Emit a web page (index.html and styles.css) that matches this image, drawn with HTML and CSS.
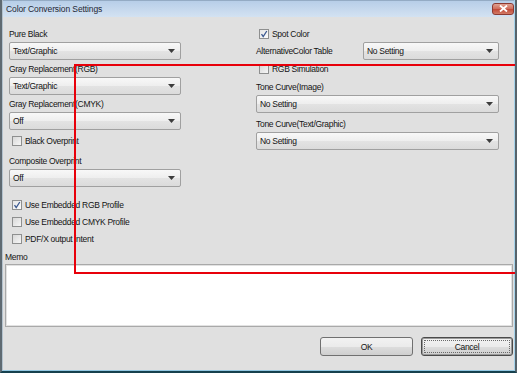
FILE: index.html
```html
<!DOCTYPE html>
<html lang="en">
<head>
  <meta charset="UTF-8" />
  <meta name="viewport" content="width=device-width, initial-scale=1.0" />
  <title>Color Conversion Settings</title>
  <link rel="stylesheet" href="styles.css">
</head>
<body>
  <div class="window">
    <div class="frame">
      <div class="titlebar">
        <span class="title">Color Conversion Settings</span>
        <span class="close">
          <svg width="9" height="7" viewBox="0 0 9 7"><path d="M1 0.5 L8 6.5 M8 0.5 L1 6.5" stroke="#fff" stroke-width="1.8"/></svg>
        </span>
      </div>

      <div class="body">
        <div class="columns">
          <div class="col col-left">
            <div class="field">
              <div class="label">Pure Black</div>
              <div class="select"><span>Text/Graphic</span><svg class="arrow" width="7" height="4" viewBox="0 0 7 4"><polygon points="0,0 7,0 3.5,4" /></svg></div>
            </div>
            <div class="field">
              <div class="label">Gray Replacement(RGB)</div>
              <div class="select"><span>Text/Graphic</span><svg class="arrow" width="7" height="4" viewBox="0 0 7 4"><polygon points="0,0 7,0 3.5,4" /></svg></div>
            </div>
            <div class="field">
              <div class="label">Gray Replacement(CMYK)</div>
              <div class="select"><span>Off</span><svg class="arrow" width="7" height="4" viewBox="0 0 7 4"><polygon points="0,0 7,0 3.5,4" /></svg></div>
            </div>
            <label class="check-row tall"><span class="box"></span>Black Overprint</label>
            <div class="field composite">
              <div class="label">Composite Overprint</div>
              <div class="select"><span>Off</span><svg class="arrow" width="7" height="4" viewBox="0 0 7 4"><polygon points="0,0 7,0 3.5,4" /></svg></div>
            </div>
            <div class="check-list">
              <label class="check-row"><span class="box checked"><svg width="8" height="8" viewBox="0 0 8 8"><path d="M1.5 4.2 L3.2 6.5 L6.8 1" fill="none" stroke="#3d5a91" stroke-width="1.3"/></svg></span>Use Embedded RGB Profile</label>
              <label class="check-row"><span class="box"></span>Use Embedded CMYK Profile</label>
              <label class="check-row"><span class="box"></span>PDF/X output intent</label>
            </div>
          </div>

          <div class="col col-right">
            <label class="check-row top"><span class="box checked"><svg width="8" height="8" viewBox="0 0 8 8"><path d="M1.5 4.2 L3.2 6.5 L6.8 1" fill="none" stroke="#3d5a91" stroke-width="1.3"/></svg></span>Spot Color</label>
            <div class="inline-field">
              <div class="label">AlternativeColor Table</div>
              <div class="select"><span>No Setting</span><svg class="arrow" width="7" height="4" viewBox="0 0 7 4"><polygon points="0,0 7,0 3.5,4" /></svg></div>
            </div>
            <label class="check-row rgb"><span class="box"></span>RGB Simulation</label>
            <div class="field tone">
              <div class="label">Tone Curve(Image)</div>
              <div class="select"><span>No Setting</span><svg class="arrow" width="7" height="4" viewBox="0 0 7 4"><polygon points="0,0 7,0 3.5,4" /></svg></div>
            </div>
            <div class="field tone-2">
              <div class="label">Tone Curve(Text/Graphic)</div>
              <div class="select"><span>No Setting</span><svg class="arrow" width="7" height="4" viewBox="0 0 7 4"><polygon points="0,0 7,0 3.5,4" /></svg></div>
            </div>
          </div>
        </div>

        <div class="memo">
          <div class="label">Memo</div>
          <div class="memo-box"></div>
        </div>

        <div class="actions">
          <button class="btn">OK</button>
          <button class="btn default"><span>Cancel</span></button>
        </div>
      </div>
    </div>

    <div class="callout"></div>
  </div>
</body>
</html>
```

FILE: styles.css
```css
* {
  box-sizing: border-box;
}
html, body {
  margin: 0;
  padding: 0;
}
body {
  font-family: 'Liberation Sans', Arial, sans-serif;
  font-size: 8.5px;
  letter-spacing: -0.3px;
  color: #141414;
  background: #e0e0e0;
}
.window {
  position: relative;
  width: 517px;
  height: 373px;
  overflow: hidden;
  border-left: 2px solid #5f6a72;
  border-right: 2px solid #56636b;
  border-bottom: 2px solid #16414e;
  background: #e0e0e0;
}
.frame {
  height: 100%;
  display: flex;
  flex-direction: column;
  border-left: 1px solid #b3c2ce;
  border-right: 1px solid #a6d3ea;
  border-bottom: 1px solid #93c8e3;
}
.titlebar {
  height: 17px;
  flex: none;
  display: flex;
  align-items: center;
  justify-content: space-between;
  padding: 0 0 0 3px;
  background: linear-gradient(#b7cee8, #cbdcef 70%, #d3e2f2);
  border-top: 1px solid #94abc4;
}
.title {
  font-size: 8.5px;
  letter-spacing: -0.1px;
  color: #1e2733;
}
.close {
  width: 22px;
  height: 12px;
  margin-top: -1px;
  display: flex;
  align-items: center;
  justify-content: center;
  border: 1px solid #8c3a32;
  border-radius: 3px;
  background: linear-gradient(#e0a292, #d0705f 45%, #c24b3a 55%, #d27a66);
}
.body {
  flex: 1;
  display: flex;
  flex-direction: column;
  padding: 10px 1px 0 2px;
}
.columns {
  display: flex;
  padding-left: 4px;
}
.col {
  display: flex;
  flex-direction: column;
}
.col-left {
  width: 172px;
}
.col-right {
  width: 243px;
  margin-left: 75px;
}
.label {
  height: 14px;
  line-height: 14px;
  white-space: nowrap;
}
.field .select {
  margin-top: 1px;
}
.field + .field {
  margin-top: 2px;
}
.select {
  height: 18px;
  display: flex;
  align-items: center;
  justify-content: space-between;
  padding: 0 5px 0 3px;
  border: 1px solid #a0a0a0;
  border-radius: 2px;
  background: linear-gradient(#f8f8f8, #eeeeee 50%, #e3e3e3 51%, #dbdbdb);
}
.arrow {
  fill: #3c3c3c;
}
.check-row {
  display: flex;
  align-items: center;
  height: 17px;
  white-space: nowrap;
}
.box {
  width: 10px;
  height: 10px;
  margin: 0 3px 0 3px;
  display: flex;
  align-items: center;
  justify-content: center;
  border: 1px solid #8e8f8f;
  background: linear-gradient(135deg, #d8d8d8, #f6f6f6);
}
.box.checked {
  background: linear-gradient(135deg, #e6e6e6, #fbfbfb);
}
.check-row.tall {
  height: 20px;
  margin-top: 1px;
}
.field.composite {
  margin-top: 3px;
}
.check-list {
  margin-top: 9px;
}
.check-row.top {
  height: 14px;
}
.inline-field {
  display: flex;
  align-items: center;
  margin-top: 1px;
}
.inline-field .label {
  width: 107px;
}
.inline-field .select {
  flex: 1;
}
.check-row.rgb {
  height: 16px;
  margin-top: 1px;
}
.field.tone {
  margin-top: 3px;
}
.field.tone-2 {
  margin-top: 4px;
}
.memo {
  margin-top: 3px;
}
.memo-box {
  height: 63px;
  background: #fff;
  border: 1px solid #a9a9a9;
  box-shadow: inset 0 0 0 1px #e2e2e2;
}
.actions {
  display: flex;
  justify-content: flex-end;
  gap: 8px;
  margin-top: 10px;
}
.btn {
  width: 93px;
  height: 19px;
  padding: 0;
  font-family: inherit;
  font-size: 8.5px;
  letter-spacing: -0.3px;
  color: #141414;
  border: 1px solid #707070;
  border-radius: 3px;
  background: linear-gradient(#f2f2f2, #ebebeb 50%, #dddddd 51%, #cfcfcf);
}
.btn.default {
  width: 92px;
  padding: 2px;
  border-color: #4a4a4a;
  box-shadow: inset 0 0 0 1px #9a9a9a;
}
.btn.default span {
  display: flex;
  align-items: center;
  justify-content: center;
  height: 100%;
  border: 1px dotted #6a6a6a;
}
.callout {
  position: absolute;
  left: 72px;
  top: 64px;
  width: 470px;
  height: 210px;
  border: 2px solid #e8000a;
  pointer-events: none;
}
```
